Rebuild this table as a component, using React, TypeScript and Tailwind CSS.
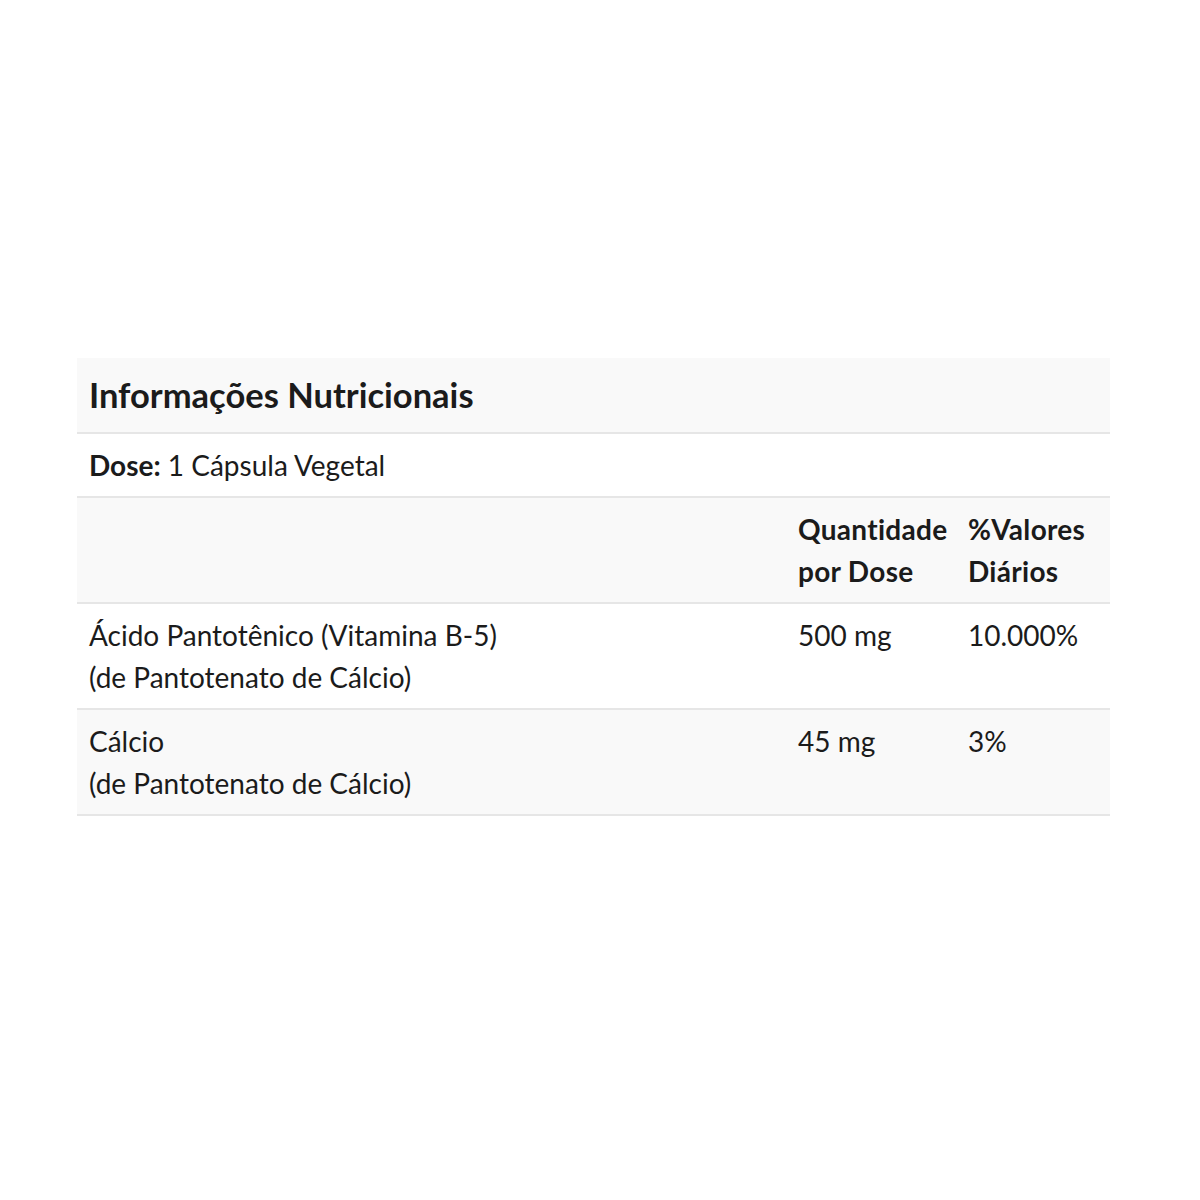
const rows = [
  {
    name: 'Ácido Pantotênico (Vitamina B-5)',
    source: '(de Pantotenato de Cálcio)',
    amount: '500 mg',
    daily: '10.000%',
  },
  {
    name: 'Cálcio',
    source: '(de Pantotenato de Cálcio)',
    amount: '45 mg',
    daily: '3%',
  },
];

export default function App() {
  return (
    <div className="min-h-[1200px] bg-white pt-[358px] px-[77px] font-['Lato',sans-serif] text-[#1b1b1b]">
      <div className="w-[1033px]">
        {/* Title */}
        <div className="bg-[#f9f9f9] border-b-2 border-[#e6e6e6] px-3 py-[11px]">
          <h2 className="text-[34.5px] leading-[52px] font-bold">Informações Nutricionais</h2>
        </div>

        {/* Dose */}
        <div className="bg-white border-b-2 border-[#e6e6e6] px-3 py-[10px] text-[28px] leading-[42px]">
          <span className="font-bold">Dose:</span> 1 Cápsula Vegetal
        </div>

        {/* Column headings */}
        <div className="grid grid-cols-[709px_170px_154px] bg-[#f9f9f9] border-b-2 border-[#e6e6e6] text-[28px] leading-[42px] font-bold">
          <div className="px-3 py-[10px]" />
          <div className="px-3 py-[10px] tracking-[0.3px]">
            Quantidade
            <br />
            por Dose
          </div>
          <div className="px-3 py-[10px] tracking-[0.3px]">
            %Valores
            <br />
            Diários
          </div>
        </div>

        {rows.map((r, i) => (
          <div
            key={r.name}
            className={
              'grid grid-cols-[709px_170px_154px] border-b-2 border-[#e6e6e6] text-[28px] leading-[42px] ' +
              (i % 2 === 1 ? 'bg-[#f9f9f9]' : 'bg-white')
            }
          >
            <div className="px-3 py-[10px]">
              {r.name}
              <br />
              {r.source}
            </div>
            <div className="px-3 py-[10px]">{r.amount}</div>
            <div className="px-3 py-[10px]">{r.daily}</div>
          </div>
        ))}
      </div>
    </div>
  );
}
